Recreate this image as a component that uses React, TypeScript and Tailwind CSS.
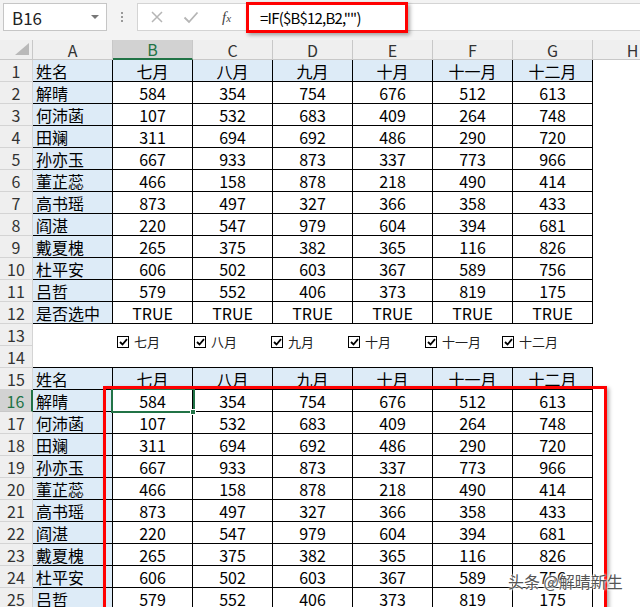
import React from "react";

const MONTHS = ["七月", "八月", "九月", "十月", "十一月", "十二月"];
const COLS = ["A", "B", "C", "D", "E", "F", "G", "H"];

const ROWS: [string, number[]][] = [
    ["解晴", [584, 354, 754, 676, 512, 613]],
    ["何沛菡", [107, 532, 683, 409, 264, 748]],
    ["田斓", [311, 694, 692, 486, 290, 720]],
    ["孙亦玉", [667, 933, 873, 337, 773, 966]],
    ["董芷蕊", [466, 158, 878, 218, 490, 414]],
    ["高书瑶", [873, 497, 327, 366, 358, 433]],
    ["阎湛", [220, 547, 979, 604, 394, 681]],
    ["戴夏槐", [265, 375, 382, 365, 116, 826]],
    ["杜平安", [606, 502, 603, 367, 589, 756]],
    ["吕哲", [579, 552, 406, 373, 819, 175]],
];

function RowHead({ n, active }: { n: number; active?: boolean }) {
    return (
        <div
            className={
                active
                    ? "h-[22px] flex items-center justify-center bg-[#d2d2d2] border-b border-[#c8c8c8] border-r-2 border-r-[#217346] text-[#217346] text-[16px] leading-none"
                    : "h-[22px] flex items-center justify-center bg-[#efefef] border-b border-r border-[#d4d4d4] text-[#333] text-[16px] leading-none"
            }
        >
            {n}
        </div>
    );
}

function NameCell({ text }: { text: string }) {
    return (
        <div className="h-[22px] flex items-center pl-[3px] bg-[#ddebf7] border-r border-b border-black text-[16px] leading-none text-black">
            {text}
        </div>
    );
}

function ValueCell({ text, head, selected }: { text: string | number; head?: boolean; selected?: boolean }) {
    return (
        <div
            className={
                (head ? "bg-[#ddebf7] " : "bg-white ") +
                "relative h-[22px] flex items-center justify-center border-r border-b border-black text-[16px] leading-none text-black"
            }
        >
            {text}
            {selected && (
                <>
                    <div className="absolute z-10 -left-[2px] -top-[2px] w-[84px] h-[25px] border-2 border-[#217346]" />
                    <div className="absolute z-10 -right-[4px] -bottom-[4px] w-[6px] h-[6px] bg-[#217346] border border-white" />
                </>
            )}
        </div>
    );
}

function Blank() {
    return <div className="h-[22px] bg-white" />;
}

function TableBlock({ start, selectedRow }: { start: number; selectedRow?: number }) {
    return (
        <>
            <RowHead n={start} />
            <NameCell text="姓名" />
            {MONTHS.map((m) => (
                <ValueCell key={m} text={m} head />
            ))}
            <Blank />
            {ROWS.map(([name, vals], i) => {
                const n = start + 1 + i;
                return (
                    <React.Fragment key={n}>
                        <RowHead n={n} active={n === selectedRow} />
                        <NameCell text={name} />
                        {vals.map((v, j) => (
                            <ValueCell key={j} text={v} selected={n === selectedRow && j === 0} />
                        ))}
                        <Blank />
                    </React.Fragment>
                );
            })}
        </>
    );
}

function CheckBox({ label }: { label: string }) {
    return (
        <div className="w-[77px] flex items-center gap-[5px]">
            <div className="w-[12px] h-[12px] border border-black bg-white flex items-center justify-center">
                <svg width="9" height="8" viewBox="0 0 9 8">
                    <path d="M1 4 L3.5 6.5 L8 1.2" fill="none" stroke="#000" strokeWidth="1.8" />
                </svg>
            </div>
            <span className="text-[13px] leading-none text-[#222]">{label}</span>
        </div>
    );
}

export default function App() {
    return (
        <div className="relative w-[640px] h-[607px] overflow-hidden bg-white [font-family:'Noto_Sans_CJK_SC','Liberation_Sans',sans-serif]">
            {/* formula bar */}
            <div className="h-[40px] bg-[#f3f3f3] flex items-start pt-[3px] pl-[3px]">
                <div className="w-[104px] h-[28px] bg-white border border-[#c6c6c6] flex items-center justify-between pl-[8px] pr-[7px]">
                    <span className="text-[17px] leading-none text-[#222]">B16</span>
                    <svg width="8" height="4" viewBox="0 0 8 4">
                        <path d="M0 0 L8 0 L4 4 Z" fill="#777" />
                    </svg>
                </div>
                <div className="w-[30px] h-[28px] flex flex-col items-center justify-center gap-[2px]">
                    <span className="w-[2px] h-[2px] bg-[#999]" />
                    <span className="w-[2px] h-[2px] bg-[#999]" />
                    <span className="w-[2px] h-[2px] bg-[#999]" />
                </div>
                <div className="flex-1 h-[28px] bg-white border border-[#d4d4d4] border-r-0 flex items-center pl-[12px]">
                    <svg width="14" height="14" viewBox="0 0 14 14">
                        <path d="M2 2 L12 12 M12 2 L2 12" stroke="#b5b5b5" strokeWidth="1.5" />
                    </svg>
                    <svg width="16" height="14" viewBox="0 0 16 14" className="ml-[19px]">
                        <path d="M1.5 7.5 L6 12 L14.5 2.5" fill="none" stroke="#b5b5b5" strokeWidth="1.8" />
                    </svg>
                    <span className="ml-[23px] text-[15px] leading-none italic text-[#444] [font-family:'Liberation_Serif',serif]">
                        f<span className="text-[11px]">x</span>
                    </span>
                    <span className="ml-[29px] text-[15px] tracking-[-0.8px] leading-none text-black">
                        =IF($B$12,B2,"")
                    </span>
                </div>
            </div>

            {/* sheet */}
            <div className="grid grid-cols-[33px_repeat(8,80px)] w-[673px]">
                <div className="h-[20px] relative bg-[#efefef] border-r border-b border-[#c8c8c8]">
                    <svg width="14" height="12" viewBox="0 0 14 12" className="absolute right-[3px] bottom-[4px]">
                        <path d="M14 0 L14 12 L0 12 Z" fill="#b9b9b9" />
                    </svg>
                </div>
                {COLS.map((c) => (
                    <div
                        key={c}
                        className={
                            c === "B"
                                ? "h-[20px] flex items-center justify-center bg-[#d2d2d2] border-r border-[#c8c8c8] border-b-2 border-b-[#217346] text-[#217346] text-[16px] leading-none"
                                : "h-[20px] flex items-center justify-center bg-[#efefef] border-r border-b border-[#c8c8c8] text-[#333] text-[16px] leading-none"
                        }
                    >
                        {c}
                    </div>
                ))}

                <TableBlock start={1} />

                <RowHead n={12} />
                <NameCell text="是否选中" />
                {MONTHS.map((m) => (
                    <ValueCell key={m} text="TRUE" />
                ))}
                <Blank />

                <RowHead n={13} />
                <div className="col-span-7 row-span-2 bg-white border-b border-black flex items-start pt-[11px] pl-[84px]">
                    {MONTHS.map((m) => (
                        <CheckBox key={m} label={m} />
                    ))}
                </div>
                <div className="row-span-2 bg-white" />
                <RowHead n={14} />

                <TableBlock start={15} selectedRow={16} />
            </div>

            {/* annotations */}
            <div className="absolute z-20 left-[246px] top-[2px] w-[162px] h-[31px] border-[3px] border-[#ff0000] shadow-[2px_2px_4px_rgba(0,0,0,0.35)]" />
            <div className="absolute z-20 left-[103px] top-[386px] w-[504px] h-[260px] border-[3px] border-[#ff0000] shadow-[2px_2px_4px_rgba(0,0,0,0.35)]" />

            <div className="absolute z-30 left-[508px] top-[573px] text-[16px] leading-none text-[#555] [text-shadow:0_0_2px_#fff,0_0_2px_#fff,0_0_3px_#fff]">
                头条 @解晴新生
            </div>
        </div>
    );
}
